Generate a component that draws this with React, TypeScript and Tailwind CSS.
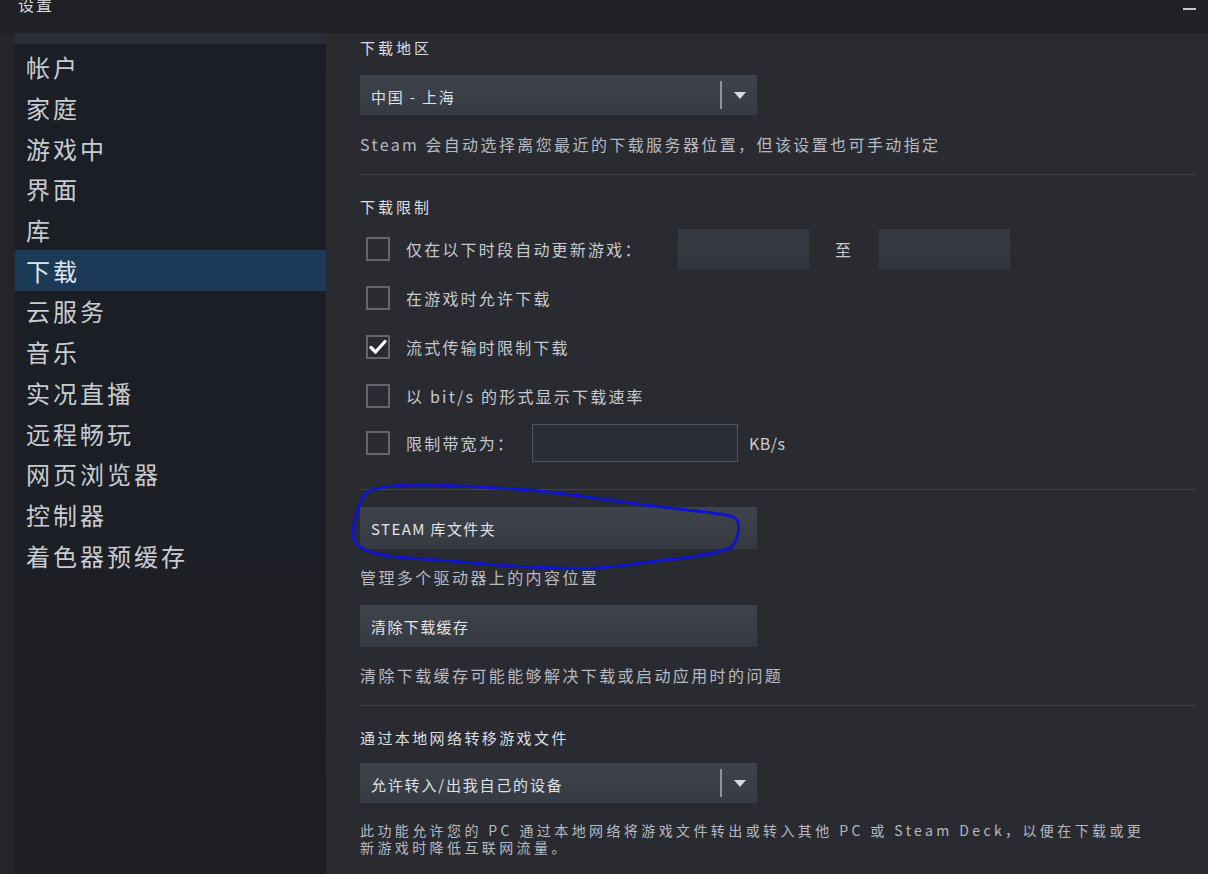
import React from 'react'

const FONT = { fontFamily: '"Noto Sans CJK SC", "Liberation Sans", sans-serif' }

const NAV_ITEMS = [
  '帐户',
  '家庭',
  '游戏中',
  '界面',
  '库',
  '下载',
  '云服务',
  '音乐',
  '实况直播',
  '远程畅玩',
  '网页浏览器',
  '控制器',
  '着色器预缓存',
]

function Checkbox({ checked }: { checked?: boolean }) {
  return (
    <div className="w-[24px] h-[24px] border-2 border-[#62666d] flex items-center justify-center shrink-0">
      {checked && (
        <svg width="18" height="16" viewBox="0 0 18 16" aria-hidden="true">
          <path d="M2 8.5 L6.5 13 L16 2.5" fill="none" stroke="#ffffff" strokeWidth="3.2" strokeLinecap="round" strokeLinejoin="round" />
        </svg>
      )}
    </div>
  )
}

function Dropdown({ label }: { label: string }) {
  return (
    <div className="w-[397px] h-[40px] bg-linear-to-b from-[#3f434c] to-[#363a42] flex items-center">
      <span className="flex-1 pl-[11px] pt-[5px] text-[15px] tracking-[1.8px] text-[#dfe1e5]">{label}</span>
      <div className="w-[2px] h-[28px] bg-[#8e939b]" />
      <div className="w-[35px] flex items-center justify-center">
        <svg width="12" height="7" viewBox="0 0 12 7" aria-hidden="true">
          <path d="M0 0 H12 L6 7 Z" fill="#d8dade" />
        </svg>
      </div>
    </div>
  )
}

function ActionButton({ label }: { label: string }) {
  return (
    <div className="w-[397px] h-[42px] bg-linear-to-b from-[#3f434c] to-[#353940] flex items-center pl-[11px] pt-[3px] text-[15px] tracking-[1.4px] text-[#e2e4e8]">
      {label}
    </div>
  )
}

function Row({ checked, children }: { checked?: boolean; children: React.ReactNode }) {
  return (
    <div className="h-[49px] flex items-center pl-[6px] gap-[16px]">
      <Checkbox checked={checked} />
      {children}
    </div>
  )
}

export default function App() {
  return (
    <div style={FONT} className="relative w-[1208px] h-[874px] overflow-hidden bg-[#23252b] flex flex-col">
      {/* title bar */}
      <div className="h-[33px] shrink-0 bg-[#1f2126] flex items-start justify-between px-[18px]">
        <span className="-mt-[8px] text-[16px] tracking-[2px] text-[#d5d8dc]">设置</span>
        <div className="mt-[8px] w-[13px] h-[2px] bg-[#c3c6cb] -mr-[6px]" />
      </div>

      <div className="flex flex-1 min-h-0">
        {/* sidebar */}
        <nav className="ml-[15px] w-[311px] shrink-0 bg-linear-to-b from-[#1b1e26] to-[#1d1f24] flex flex-col">
          <div className="h-[11px] bg-[#2a2d35]" />
          <div className="pt-[3px] flex flex-col">
            {NAV_ITEMS.map((item) => (
              <div
                key={item}
                className={`h-[40.7px] flex items-center pl-[11px] text-[24px] tracking-[3px] text-[#c9ccd1] ${
                  item === '下载' ? 'bg-[#1b3a58] text-[#e4e6ea]' : ''
                }`}
              >
                {item}
              </div>
            ))}
          </div>
        </nav>

        {/* content */}
        <main className="flex-1 bg-[#292b31] pl-[34px] pr-[13px] flex flex-col text-[#dcdfe3]">
          <div className="mt-[5px] h-[20px] leading-[20px] text-[15px] tracking-[3px]">下载地区</div>
          <div className="mt-[17px]">
            <Dropdown label="中国 - 上海" />
          </div>
          <p className="mt-[19px] h-[20px] leading-[20px] text-[16px] tracking-[2.4px] text-[#b7bac0]">
            Steam 会自动选择离您最近的下载服务器位置，但该设置也可手动指定
          </p>
          <div className="mt-[20px] h-px bg-[#43464d]" />

          <div className="mt-[22px] h-[20px] leading-[20px] text-[15px] tracking-[3px]">下载限制</div>

          <div className="mt-[7px] flex flex-col text-[16px] tracking-[2.2px] text-[#c6c9ce]">
            <Row>
              <span className="w-[256px]">仅在以下时段自动更新游戏：</span>
              <div className="w-[131px] h-[40px] bg-linear-to-b from-[#363940] to-[#33363c]" />
              <span className="w-[38px] text-center">至</span>
              <div className="w-[131px] h-[40px] bg-linear-to-b from-[#363940] to-[#33363c]" />
            </Row>
            <Row>
              <span>在游戏时允许下载</span>
            </Row>
            <Row checked>
              <span>流式传输时限制下载</span>
            </Row>
            <Row>
              <span>以 bit/s 的形式显示下载速率</span>
            </Row>
            <div className="h-[45px] flex items-center pl-[6px] gap-[16px]">
              <Checkbox />
              <span className="w-[110px]">限制带宽为：</span>
              <div className="w-[206px] h-[38px] border border-[#50545c] bg-[#2b2e34]" />
              <span className="-ml-[5px] tracking-[0.5px] text-[#c9ccd1]">KB/s</span>
            </div>
          </div>

          <div className="mt-[24px] h-px bg-[#43464d]" />

          <div className="mt-[17px]">
            <ActionButton label="STEAM 库文件夹" />
          </div>
          <p className="mt-[18px] h-[20px] leading-[20px] text-[16px] tracking-[2.4px] text-[#b7bac0]">管理多个驱动器上的内容位置</p>
          <div className="mt-[18px]">
            <ActionButton label="清除下载缓存" />
          </div>
          <p className="mt-[18px] h-[20px] leading-[20px] text-[16px] tracking-[2.4px] text-[#b7bac0]">
            清除下载缓存可能能够解决下载或启动应用时的问题
          </p>
          <div className="mt-[20px] h-px bg-[#43464d]" />

          <div className="mt-[22px] h-[20px] leading-[20px] text-[15px] tracking-[2.4px]">通过本地网络转移游戏文件</div>
          <div className="mt-[15px]">
            <Dropdown label="允许转入/出我自己的设备" />
          </div>
          <p className="mt-[19px] leading-[17px] text-[14px] tracking-[3.4px] text-[#b7bac0]">
            此功能允许您的 PC 通过本地网络将游戏文件转出或转入其他 PC 或 Steam Deck，以便在下载或更
            <br />
            新游戏时降低互联网流量。
          </p>
        </main>
      </div>

      {/* hand-drawn annotation */}
      <svg className="absolute left-0 top-0 pointer-events-none" width="1208" height="874" aria-hidden="true">
        <path
          d="M367 492 C385 484 410 485 430 485 C465 486 500 488 530 490 C570 494 600 499 630 503 C660 507 690 510 713 513 C725 515 735 515 738 522 C740 530 737 542 730 548 C710 555 690 558 663 560 C640 563 620 567 597 568 C575 569 550 568 530 567 C505 566 485 564 463 562 C440 560 420 559 397 557 C380 555 367 552 360 547 C354 542 352 538 353 533 C354 525 354 518 357 513 C360 503 362 496 367 492 Z"
          fill="none"
          stroke="#1016c8"
          strokeWidth="3"
          strokeLinejoin="round"
        />
      </svg>
    </div>
  )
}
